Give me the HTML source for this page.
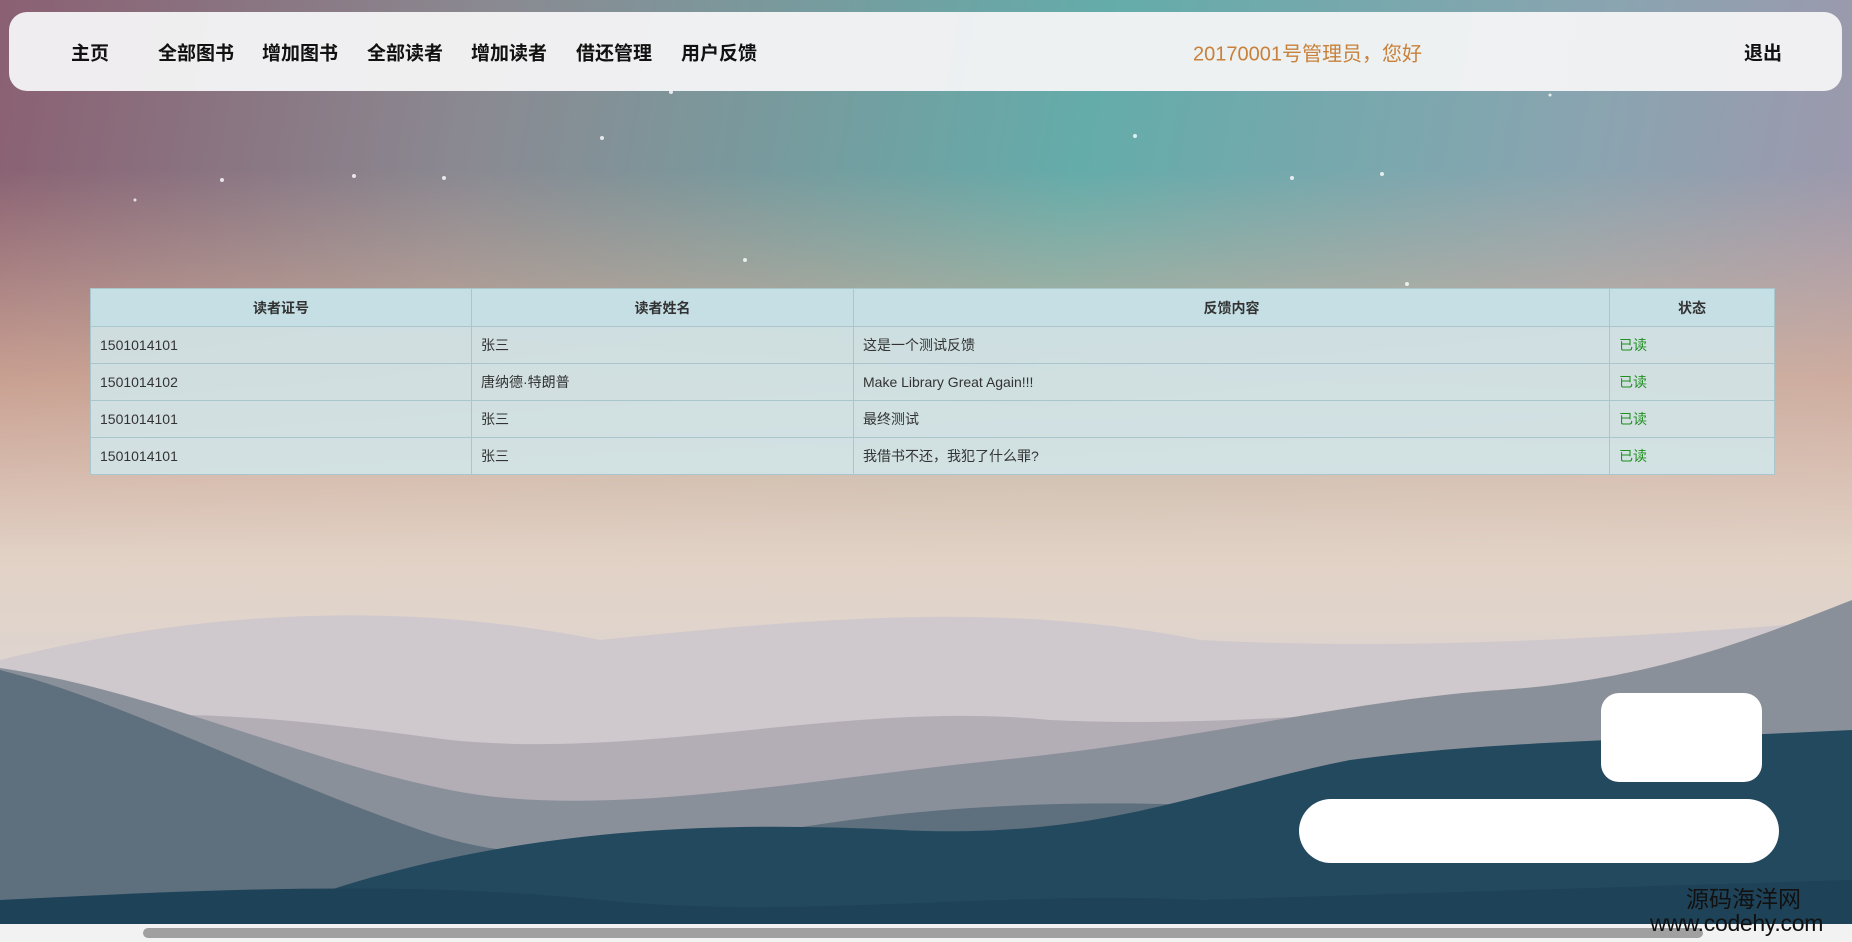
<!DOCTYPE html>
<html><head><meta charset="utf-8"><style>
*{margin:0;padding:0;box-sizing:border-box}
body{width:1852px;height:942px;overflow:hidden;position:relative;font-family:"Liberation Sans","Noto Sans CJK SC",sans-serif;
background:linear-gradient(100deg,#8a6072 0%,#8a8a92 25%,#64acaa 55%,#8aa4b0 80%,#a593ab 100%);}
#sky2{position:absolute;left:0;top:0;width:1852px;height:942px;background:linear-gradient(180deg,rgba(0,0,0,0) 0px,rgba(0,0,0,0) 170px,rgba(222,180,155,.75) 380px,rgba(226,210,198,1) 560px,#ddd6d2 700px)}
svg.bg{position:absolute;left:0;top:0}
.nav{position:absolute;left:9px;top:12px;width:1833px;height:79px;background:rgba(244,244,246,.95);border-radius:18px}
.nav a{position:absolute;top:40px;transform:translateY(-50%);font-size:19px;font-weight:bold;color:#111;text-decoration:none;white-space:nowrap}
.greet{position:absolute;left:1184px;top:40px;transform:translateY(-50%);font-size:20px;color:#c8813a;white-space:nowrap}
table{position:absolute;left:90px;top:288px;width:1685px;border-collapse:collapse;background:rgba(210,228,232,.9);font-size:14px;color:#333}
td,th{border:1px solid #a9c6cc;height:37px;padding:0 9px;text-align:left;font-weight:normal}
th{height:38px;text-align:center;font-weight:bold;background:rgba(196,222,228,.95);font-size:14px}
.g{color:#1f8f1f}
.wm1{position:absolute;left:1686px;top:886px;font-size:23px;line-height:26px;color:#111}
.wm2{position:absolute;left:1650px;top:910px;font-size:23px;line-height:26px;color:#111;letter-spacing:-0.3px}
.sb{position:absolute;left:0;top:924px;width:1852px;height:18px;background:#f2f2f2}
.sb div{position:absolute;left:143px;top:4px;width:1560px;height:10px;background:#a0a0a0;border-radius:5px}
</style></head><body>
<div id="sky2"></div>
<svg class="bg" width="1852" height="942" viewBox="0 0 1852 942">
<g fill="#fff" opacity=".8"><circle cx="222" cy="180" r="2"/><circle cx="354" cy="176" r="2"/><circle cx="444" cy="178" r="2"/><circle cx="602" cy="138" r="2"/><circle cx="671" cy="92" r="2"/><circle cx="1135" cy="136" r="2"/><circle cx="1382" cy="174" r="2"/><circle cx="1292" cy="178" r="2"/><circle cx="745" cy="260" r="2"/><circle cx="1407" cy="284" r="2"/><circle cx="135" cy="200" r="1.5"/><circle cx="1550" cy="95" r="1.5"/></g>
<path d="M0 660 C200 610 400 600 600 640 C800 620 1000 600 1200 640 C1400 650 1600 640 1852 620 L1852 942 L0 942Z" fill="#cfc8cc"/>
<path d="M0 730 C150 700 300 720 450 740 C650 760 850 700 1050 720 C1250 730 1450 700 1852 690 L1852 942 L0 942Z" fill="#b3adb6"/>
<path d="M0 668 C150 690 300 760 450 790 C600 820 800 780 1000 760 C1200 740 1350 700 1500 690 C1650 680 1750 640 1852 600 L1852 942 L0 942Z" fill="#8a909a"/>
<path d="M0 670 C120 700 250 770 420 830 C560 880 700 840 850 820 C1000 800 1150 800 1300 810 L1852 800 L1852 942 L0 942Z" fill="#5e6f7e"/>
<path d="M300 900 C500 830 700 820 900 830 C1100 840 1200 790 1350 760 C1500 740 1650 740 1852 730 L1852 942 L300 942Z" fill="#23495e"/>
<path d="M0 942 L0 900 C200 890 400 880 600 900 C800 920 1000 890 1200 900 L1852 880 L1852 942Z" fill="#1e4258"/>
</svg>
<div class="nav">
<a style="left:62px">主页</a><a style="left:149px">全部图书</a><a style="left:253px">增加图书</a><a style="left:358px">全部读者</a><a style="left:462px">增加读者</a><a style="left:567px">借还管理</a><a style="left:672px">用户反馈</a>
<span class="greet">20170001号管理员，您好</span>
<a style="left:1735px">退出</a>
</div>
<table>
<tr><th style="width:381px">读者证号</th><th style="width:382px">读者姓名</th><th style="width:756px">反馈内容</th><th>状态</th></tr>
<tr><td>1501014101</td><td>张三</td><td>这是一个测试反馈</td><td class="g">已读</td></tr>
<tr><td>1501014102</td><td>唐纳德·特朗普</td><td>Make Library Great Again!!!</td><td class="g">已读</td></tr>
<tr><td>1501014101</td><td>张三</td><td>最终测试</td><td class="g">已读</td></tr>
<tr><td>1501014101</td><td>张三</td><td>我借书不还，我犯了什么罪?</td><td class="g">已读</td></tr>
</table>
<div style="position:absolute;left:1601px;top:693px;width:161px;height:89px;background:#fff;border-radius:18px"></div>
<div style="position:absolute;left:1299px;top:799px;width:480px;height:64px;background:#fff;border-radius:32px"></div>
<div class="sb"><div></div></div>
<div class="wm1">源码海洋网</div>
<div class="wm2">www.codehy.com</div>
</body></html>
